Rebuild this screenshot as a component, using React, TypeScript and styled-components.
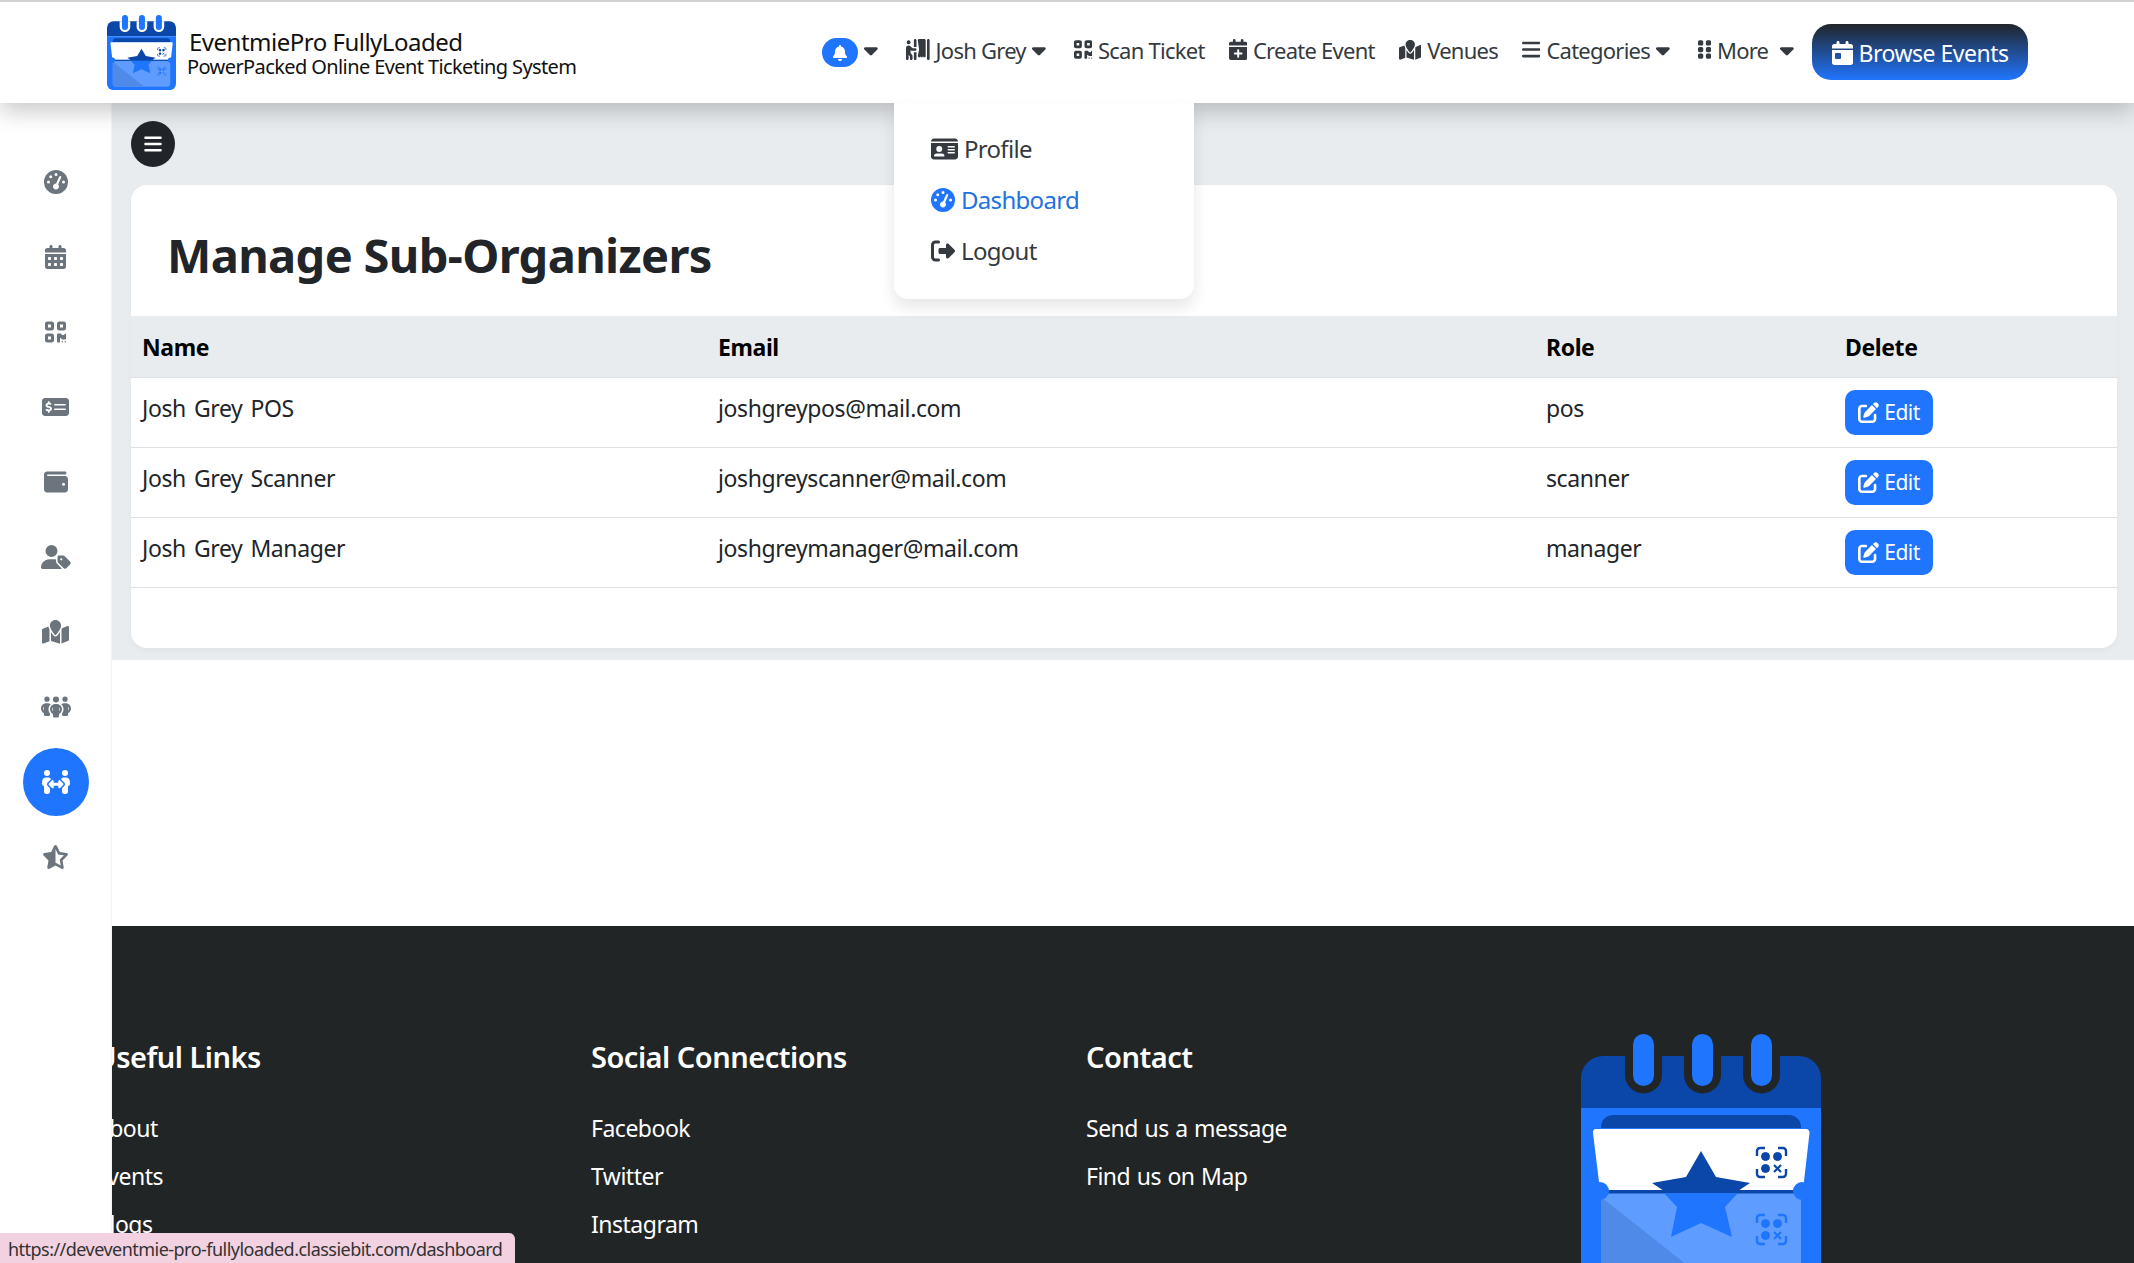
import React from "react";
import styled, { createGlobalStyle } from "styled-components";
import {
  FaBars,
  FaBell,
  FaCalendarDay,
  FaCalendarDays,
  FaCalendarPlus,
  FaCaretDown,
  FaGaugeHigh,
  FaGripVertical,
  FaIdCard,
  FaMapLocation,
  FaMoneyCheckDollar,
  FaPenToSquare,
  FaPeopleArrows,
  FaPeopleGroup,
  FaPersonBooth,
  FaQrcode,
  FaRightFromBracket,
  FaStarHalfStroke,
  FaUserTag,
  FaWallet,
} from "react-icons/fa6";

const colors = {
  blue: "#1f75fe",
  navy: "#0a47a9",
  dark: "#212529",
  text: "#343a40",
  muted: "#6c757d",
  gray: "#e9ecef",
  line: "#dee2e6",
};

const GlobalStyle = createGlobalStyle`
  html, body {
    margin: 0;
    height: 100%;
    overflow: hidden;
    background: #fff;
    font-family: "Noto Sans", "Open Sans", sans-serif;
    color: ${colors.dark};
  }
  * { box-sizing: border-box; }
`;

// react-icons forces a 1em square, so the real box comes from the glyph's own ratio
const Glyph = styled.span<{ $h: number; $r?: number }>`
  display: inline-flex;
  flex: none;
  svg {
    height: ${(p) => p.$h}px;
    width: ${(p) => p.$h * (p.$r ?? 1)}px;
  }
`;

const Header = styled.header`
  position: relative;
  z-index: 3;
  height: 103px;
  display: flex;
  align-items: center;
  padding: 0 106px 0 107px;
  background: #fff;
  border-top: 2px solid #cfd1d3;
  box-shadow: 0 8px 22px rgba(0, 0, 0, 0.22);
`;

const Brand = styled.div`
  display: flex;
  align-items: center;
  gap: 11px;
`;

const BrandText = styled.div`
  display: flex;
  flex-direction: column;
  padding-top: 2px;
  color: #111;
`;

const BrandTitle = styled.span`
  font-size: 24px;
  line-height: 27px;
  letter-spacing: -0.5px;
  margin-left: 2px;
`;

const BrandSub = styled.span`
  font-size: 20px;
  line-height: 24px;
  letter-spacing: -0.6px;
`;

const Nav = styled.nav`
  margin-left: auto;
  display: flex;
  align-items: center;
  gap: 24px;
`;

const NavItem = styled.a`
  display: flex;
  align-items: center;
  gap: 6px;
  padding-bottom: 6px;
  font-size: 22px;
  letter-spacing: -0.75px;
  color: ${colors.text};
`;

const CaretBox = styled(Glyph)<{ $offset: number }>`
  margin-left: ${(p) => p.$offset}px;
  margin-right: 4px;
`;

const BellPill = styled.span`
  width: 36px;
  height: 29px;
  margin-top: 6px;
  border-radius: 15px;
  display: flex;
  align-items: center;
  justify-content: center;
  background: ${colors.blue};
  color: #fff;
`;

const BrowseButton = styled.a`
  margin: 0 0 1px -10px;
  width: 216px;
  height: 56px;
  padding-top: 2px;
  display: flex;
  align-items: center;
  justify-content: center;
  gap: 6px;
  border-radius: 19px;
  color: #fff;
  font-size: 23px;
  letter-spacing: -0.5px;
  background: linear-gradient(180deg, ${colors.dark} 0%, ${colors.blue} 100%);
`;

const Dropdown = styled.div`
  position: absolute;
  top: 101px;
  left: 894px;
  width: 300px;
  height: 196px;
  padding: 20px 37px;
  display: flex;
  flex-direction: column;
  background: #fff;
  border-radius: 0 0 14px 14px;
  box-shadow: 0 8px 16px rgba(0, 0, 0, 0.1);
`;

const DropdownItem = styled.a<{ $active?: boolean }>`
  height: 51px;
  display: flex;
  align-items: center;
  gap: 6px;
  font-size: 24px;
  letter-spacing: -0.7px;
  color: ${(p) => (p.$active ? "#2272e0" : colors.text)};
  svg {
    color: ${(p) => (p.$active ? colors.blue : colors.text)};
  }
`;

const Shell = styled.div`
  height: calc(100vh - 103px);
  display: grid;
  grid-template-columns: 112px 1fr;
`;

const Sidebar = styled.aside`
  padding-top: 45px;
  display: flex;
  flex-direction: column;
  align-items: center;
  background: #fff;
  border-right: 1px solid #f3f4f5;
`;

const SideLink = styled.a<{ $active?: boolean }>`
  width: 66px;
  height: 68px;
  margin-bottom: 7px;
  flex: none;
  display: flex;
  align-items: center;
  justify-content: center;
  border-radius: 50%;
  background: ${(p) => (p.$active ? colors.blue : "transparent")};
  color: ${(p) => (p.$active ? "#fff" : colors.muted)};
`;

const Main = styled.main`
  min-width: 0;
  overflow: hidden;
`;

const Content = styled.div`
  height: 557px;
  padding: 18px 17px 0 19px;
  background: ${colors.gray};
`;

const Toggle = styled.button`
  width: 44px;
  height: 46px;
  border: 0;
  padding: 0;
  display: flex;
  align-items: center;
  justify-content: center;
  border-radius: 50%;
  color: #fff;
  background: ${colors.dark};
  svg { font-size: 20px; }
`;

const Card = styled.section`
  height: 463px;
  margin-top: 18px;
  background: #fff;
  border-radius: 16px;
  overflow: hidden;
  box-shadow: 0 3px 6px rgba(0, 0, 0, 0.03);
`;

const Title = styled.h1`
  height: 131px;
  margin: 0;
  padding: 8px 36px 0;
  display: flex;
  align-items: center;
  font-size: 47px;
  font-weight: 700;
  letter-spacing: -0.65px;
`;

const Table = styled.table`
  width: 100%;
  border-collapse: collapse;
  table-layout: fixed;
`;

const HeadCell = styled.th<{ $width?: number }>`
  width: ${(p) => (p.$width ? `${p.$width}px` : "auto")};
  height: 61px;
  padding: 2px 11px 0;
  text-align: left;
  font-size: 23px;
  font-weight: 700;
  letter-spacing: -0.4px;
  color: #000;
  background: ${colors.gray};
  border-bottom: 1px solid ${colors.line};
`;

const Cell = styled.td`
  height: 70px;
  padding: 0 11px 8px;
  font-size: 23px;
  letter-spacing: -0.4px;
  word-spacing: 2.5px;
  border-bottom: 1px solid ${colors.line};
`;

const EditButton = styled.a`
  width: 88px;
  height: 45px;
  margin-top: 8px;
  display: flex;
  align-items: center;
  justify-content: center;
  gap: 5px;
  border-radius: 10px;
  color: #fff;
  background: ${colors.blue};
  font-size: 21px;
  letter-spacing: -0.5px;
  svg { font-size: 21px; }
`;

const Spacer = styled.div`
  height: 266px;
`;

const Footer = styled.footer`
  padding: 111px 0 0 0;
  background: #212526;
  color: #fff;
`;

const FooterGrid = styled.div`
  margin-left: -17px;
  display: grid;
  grid-template-columns: 496px 495px 495px 240px;
`;

const FooterHeading = styled.h4`
  margin: 0 0 27px;
  font-size: 29px;
  line-height: 40px;
  font-weight: 600;
  letter-spacing: -0.5px;
`;

const FooterLink = styled.a`
  display: block;
  height: 48px;
  line-height: 48px;
  font-size: 23px;
  letter-spacing: -0.5px;
  word-spacing: 1px;
`;

const BigLogo = styled.div`
  margin-top: -3px;
  width: 240px;
`;

const StatusTip = styled.div`
  position: fixed;
  z-index: 5;
  left: 0;
  bottom: 0;
  width: 515px;
  height: 30px;
  padding: 2px 0 0 8px;
  display: flex;
  align-items: center;
  border-top-right-radius: 6px;
  background: #f2d1e1;
  color: #333;
  font-size: 18px;
  letter-spacing: -0.53px;
  white-space: nowrap;
`;

const QrMark = ({ x, y, color }: { x: number; y: number; color: string }) => (
  <g transform={`translate(${x} ${y})`} fill={color} stroke={color}>
    <path
      d="M1 9V4a3 3 0 0 1 3-3h5M22 1h5a3 3 0 0 1 3 3v5M1 22v5a3 3 0 0 0 3 3h5M22 30h5a3 3 0 0 0 3-3v-5"
      fill="none"
      strokeWidth="2.4"
    />
    <circle cx="9.5" cy="9.5" r="4" />
    <circle cx="21.5" cy="9.5" r="4" />
    <circle cx="9.5" cy="21.5" r="4" />
    <path d="M18 18l7 7M25 18l-7 7" fill="none" strokeWidth="2.2" />
  </g>
);

// brand mark, hole is whatever sits behind the logo
const LogoMark = ({ width, hole }: { width: number; hole: string }) => (
  <svg width={width} viewBox="0 0 240 261" style={{ display: "block" }}>
    <path d="M0 74V44a22 22 0 0 1 22-22h196a22 22 0 0 1 22 22v30z" fill={colors.navy} />
    <path d="M0 74h240v165a22 22 0 0 1-22 22H22a22 22 0 0 1-22-22z" fill={colors.blue} />
    {[44, 103, 162].map((x) => (
      <path key={x} d={`M${x} 22h37v19a18.500 18.500 0 0 1-37 0z`} fill={hole} />
    ))}
    {[52, 111, 170].map((x) => (
      <rect key={x} x={x} y="0" width="21" height="52" rx="10.500" fill={colors.blue} />
    ))}
    <path d="M20 94V93a12 12 0 0 1 12-12h176a12 12 0 0 1 12 12v1z" fill={colors.navy} />
    <path d="M20 159h200v79a12 12 0 0 1-12 12H32a12 12 0 0 1-12-12z" fill="#5f9cff" />
    <path d="M20 163L130 250H32a12 12 0 0 1-12-12z" fill="#4f8ae8" />
    <path d="M15 95h210a3.500 3.500 0 0 1 3.500 4L222 156H19L12 99a3.500 3.500 0 0 1 3-4z" fill="#fff" />
    <rect x="24" y="156" width="192" height="3.500" fill={colors.navy} />
    <circle cx="19" cy="157" r="9" fill={colors.blue} />
    <circle cx="221" cy="157" r="9" fill={colors.blue} />
    <polygon points="120,117 135,143 169,149 157,157 83,157 71,149 105,143" fill={colors.navy} />
    <polygon points="83,159 157,159 144,173 151,203 120,189 90,203 96,173" fill={colors.blue} />
    <QrMark x={175} y={113} color={colors.navy} />
    <QrMark x={175} y={180} color={colors.blue} />
  </svg>
);

const Caret = ({ offset = 0 }: { offset?: number }) => (
  <CaretBox $h={22} $r={0.625} $offset={offset}>
    <FaCaretDown />
  </CaretBox>
);

const sideIcons = [
  { Icon: FaGaugeHigh, ratio: 1 },
  { Icon: FaCalendarDays, ratio: 0.875 },
  { Icon: FaQrcode, ratio: 0.875 },
  { Icon: FaMoneyCheckDollar, ratio: 1.125 },
  { Icon: FaWallet, ratio: 1 },
  { Icon: FaUserTag, ratio: 1.25 },
  { Icon: FaMapLocation, ratio: 1.125 },
  { Icon: FaPeopleGroup, ratio: 1.25 },
  { Icon: FaPeopleArrows, ratio: 1.25 },
  { Icon: FaStarHalfStroke, ratio: 1.125 },
];

const rows = [
  { name: "Josh Grey POS", email: "joshgreypos@mail.com", role: "pos" },
  { name: "Josh Grey Scanner", email: "joshgreyscanner@mail.com", role: "scanner" },
  { name: "Josh Grey Manager", email: "joshgreymanager@mail.com", role: "manager" },
];

const footerColumns = [
  { title: "Useful Links", links: ["About", "Events", "Blogs"] },
  { title: "Social Connections", links: ["Facebook", "Twitter", "Instagram"] },
  { title: "Contact", links: ["Send us a message", "Find us on Map"] },
];

const App = () => (
  <>
    <GlobalStyle />
    <Header>
      <Brand>
        <LogoMark width={69} hole="#fff" />
        <BrandText>
          <BrandTitle>EventmiePro FullyLoaded</BrandTitle>
          <BrandSub>PowerPacked Online Event Ticketing System</BrandSub>
        </BrandText>
      </Brand>
      <Nav>
        <NavItem>
          <BellPill>
            <Glyph $h={16} $r={0.875}>
              <FaBell />
            </Glyph>
          </BellPill>
          <Caret />
        </NavItem>
        <NavItem>
          <Glyph $h={21} $r={1.125}>
            <FaPersonBooth />
          </Glyph>
          Josh Grey
          <Caret />
        </NavItem>
        <NavItem>
          <Glyph $h={21} $r={0.875}>
            <FaQrcode />
          </Glyph>
          Scan Ticket
        </NavItem>
        <NavItem>
          <Glyph $h={21} $r={0.875}>
            <FaCalendarPlus />
          </Glyph>
          Create Event
        </NavItem>
        <NavItem>
          <Glyph $h={20} $r={1.125}>
            <FaMapLocation />
          </Glyph>
          Venues
        </NavItem>
        <NavItem>
          <Glyph $h={21} $r={0.875}>
            <FaBars />
          </Glyph>
          Categories
          <Caret />
        </NavItem>
        <NavItem>
          <Glyph $h={21} $r={0.625}>
            <FaGripVertical />
          </Glyph>
          More
          <Caret offset={6} />
        </NavItem>
        <BrowseButton>
          <Glyph $h={24} $r={0.875}>
            <FaCalendarDay />
          </Glyph>
          Browse Events
        </BrowseButton>
      </Nav>
      <Dropdown>
        <DropdownItem>
          <Glyph $h={24} $r={1.125}>
            <FaIdCard />
          </Glyph>
          Profile
        </DropdownItem>
        <DropdownItem $active>
          <Glyph $h={24}>
            <FaGaugeHigh />
          </Glyph>
          Dashboard
        </DropdownItem>
        <DropdownItem>
          <Glyph $h={24}>
            <FaRightFromBracket />
          </Glyph>
          Logout
        </DropdownItem>
      </Dropdown>
    </Header>
    <Shell>
      <Sidebar>
        {sideIcons.map(({ Icon, ratio }, i) => (
          <SideLink key={i} $active={i === 8}>
            <Glyph $h={24} $r={ratio}>
              <Icon />
            </Glyph>
          </SideLink>
        ))}
      </Sidebar>
      <Main>
        <Content>
          <Toggle>
            <FaBars />
          </Toggle>
          <Card>
            <Title>Manage Sub-Organizers</Title>
            <Table>
              <thead>
                <tr>
                  <HeadCell $width={576}>Name</HeadCell>
                  <HeadCell $width={828}>Email</HeadCell>
                  <HeadCell $width={299}>Role</HeadCell>
                  <HeadCell>Delete</HeadCell>
                </tr>
              </thead>
              <tbody>
                {rows.map((row) => (
                  <tr key={row.email}>
                    <Cell>{row.name}</Cell>
                    <Cell>{row.email}</Cell>
                    <Cell>{row.role}</Cell>
                    <Cell>
                      <EditButton>
                        <FaPenToSquare />
                        Edit
                      </EditButton>
                    </Cell>
                  </tr>
                ))}
              </tbody>
            </Table>
          </Card>
        </Content>
        <Spacer />
        <Footer>
          <FooterGrid>
            {footerColumns.map((col) => (
              <div key={col.title}>
                <FooterHeading>{col.title}</FooterHeading>
                {col.links.map((link) => (
                  <FooterLink key={link}>{link}</FooterLink>
                ))}
              </div>
            ))}
            <BigLogo>
              <LogoMark width={240} hole="#212526" />
            </BigLogo>
          </FooterGrid>
        </Footer>
      </Main>
    </Shell>
    <StatusTip>https://deveventmie-pro-fullyloaded.classiebit.com/dashboard</StatusTip>
  </>
);

export default App;
